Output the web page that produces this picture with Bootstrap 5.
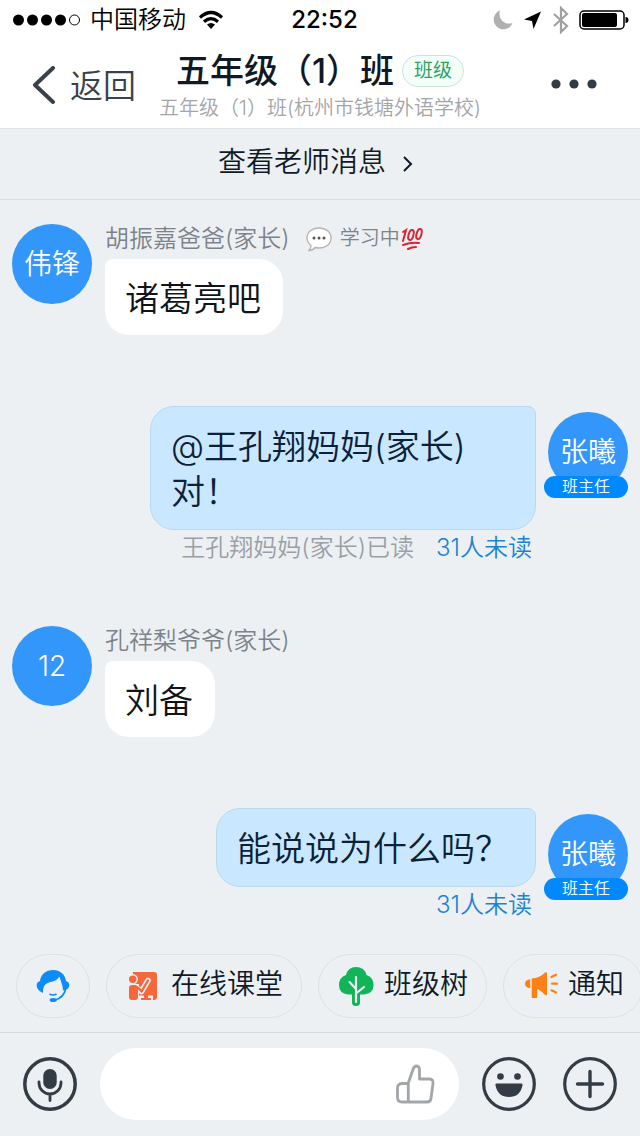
<!DOCTYPE html>
<html lang="zh-CN">
<head>
<meta charset="utf-8">
<meta name="viewport" content="width=device-width, initial-scale=1">
<title>五年级（1）班</title>
<link href="https://cdn.jsdelivr.net/npm/bootstrap@5.3.0/dist/css/bootstrap.min.css" rel="stylesheet">
<style>
  body { font-family: Inter, "Noto Sans CJK SC", sans-serif; font-weight: 350; background: #ecf0f3; color: #0f1a26; }
  button { font-weight: inherit; }
  .status { height: 40px; color: #000; font-size: 24px; line-height: 40px; padding: 0 11px 0 12px; }
  .status .clock { font-weight: 500; }
  .side { flex: 1 1 0; }
  .topbar { height: 89px; border-bottom: 1px solid #dfe4e9; }
  .plain { border: 0; background: none; padding: 0; color: inherit; line-height: 1; }
  .back { font-size: 33px; color: #3a4148; margin-left: 32px; gap: 14px; }
  .more { margin-right: 43px; }
  .room { font-size: 34px; line-height: 46px; font-weight: 500; }
  .tag { font-size: 19px; line-height: 30px; font-weight: 400; color: #27a35f; border: 1px solid #c8e6d8; background: #f5fffa; padding: 0 11px; }
  .school { font-size: 20px; line-height: 28px; color: #a3a5a8; }
  .teacher { height: 71px; font-size: 28px; color: #0f1a26; border-bottom: 1px solid #d9dee2; }
  .teacher:hover { color: #0f1a26; }
  .chat { padding: 24px 12px 31px; }
  .avatar { width: 80px; height: 80px; background: #3296fa; color: #fff; font-size: 28px; }
  .words { margin-left: 13px; }
  .who { font-size: 24px; line-height: 29px; color: #7d838a; margin-bottom: 6px; }
  .mood { font-size: 20px; }
  .bubble { font-size: 34px; line-height: 45px; padding: 17px 22px 14px 20px; background: #fff; border-radius: 8px 24px 24px 24px; color: #101418; }
  .mine { margin-top: 71px; margin-bottom: 60px; }
  .mine .stack { max-width: calc(100% - 230px); }
  .mine .bubble { background: #c9e7ff; border: 1px solid #b9d8ee; border-radius: 24px 8px 24px 24px; padding: 17px 26px 15px 20px; color: #0b2138; }
  .mine.last { margin-bottom: 0; }
  .me { width: 84px; height: 86px; margin-top: 6px; }
  .role { bottom: 0; height: 22px; font-size: 16px; line-height: 21px; background: #0089ff; color: #fff; }
  .receipt { font-size: 24px; line-height: 36px; color: #9a9fa4; gap: 22px; padding-right: 4px; }
  .receipt a { color: #1c82d6; }
  .chips { padding: 0 0 14px 16px; gap: 16px; overflow: hidden; }
  .chip { height: 64px; border: 1px solid #dce1e5; border-radius: 32px; font-size: 28px; padding: 0 18px 4px; gap: 10px; white-space: nowrap; flex: none; }
  .composer { height: 104px; border-top: 1px solid #d4d9dd; padding: 0 23px 2px; gap: 23px; }
  .entry { height: 72px; border-radius: 36px; background: #fff; padding: 0 24px 0 28px; }
  .entry input { min-width: 0; font-size: 28px; }
  .entry input:focus { box-shadow: none; }
  svg { display: block; flex: none; }
</style>
</head>
<body class="d-flex flex-column min-vh-100">
<header class="bg-white">
  <div class="status d-flex align-items-center">
    <div class="side d-flex align-items-center">
      <svg width="70" height="12" viewBox="0 0 70 12"><circle cx="6.500" cy="6" r="5.500"/><circle cx="20.500" cy="6" r="5.500"/><circle cx="34.500" cy="6" r="5.500"/><circle cx="48.500" cy="6" r="5.500"/><circle cx="62.500" cy="6" r="5" fill="none" stroke="#000"/></svg>
      <span class="ms-2 me-2">中国移动</span>
      <svg class="ms-1" width="26" height="20" viewBox="0 0 26 20" fill="none" stroke="#000" stroke-width="3.200"><path d="M2 7.500Q13-2.500 24 7.500M6 11.700q7-6 14 0"/><path d="M9 14.500q4-3 8 0L13 19z" fill="#000" stroke="none"/></svg>
    </div>
    <span class="clock ps-2">22:52</span>
    <div class="side d-flex align-items-center justify-content-end">
      <svg width="20" height="20" viewBox="0 0 20 20" fill="#b0b0b0"><path d="M7 .5A9.700 9.700 0 1 0 19.500 13C12 15.500 4.500 9.500 7 .5z"/></svg>
      <svg class="ms-2 me-2" width="22" height="20" viewBox="0 0 22 20"><path d="M20 1.500 12.500 19 11 11 3 9.500z"/></svg>
      <svg width="20" height="28" viewBox="0 0 20 28" fill="none" stroke="#a0a0a0" stroke-width="2.200"><path d="M3 8l13 12-6 6V2l6 6L3 20"/></svg>
      <svg class="ms-2" width="50" height="20" viewBox="0 0 50 20"><rect x="1" y="1" width="44" height="18" rx="4" fill="none" stroke="#000" stroke-width="1.500"/><rect x="3" y="3" width="35" height="14" rx="2"/><path d="M46.500 7q3 0 3 3t-3 3z"/></svg>
    </div>
  </div>
  <nav class="topbar d-flex">
    <div class="side d-flex align-items-center">
      <button class="plain back d-flex align-items-center text-nowrap pt-1" type="button">
        <svg width="24" height="40" viewBox="0 0 24 40" fill="none" stroke="#3a4148" stroke-width="4" stroke-linecap="round" stroke-linejoin="round"><path d="M21 2 3 19l18 17"/></svg>返回</button>
    </div>
    <div class="text-center text-nowrap pt-2">
      <div class="d-flex align-items-center justify-content-center room"><span>五年级（1）班</span><span class="tag rounded-pill ms-2">班级</span></div>
      <div class="school">五年级（1）班(杭州市钱塘外语学校)</div>
    </div>
    <div class="side d-flex align-items-center justify-content-end">
      <button class="plain more" type="button" aria-label="更多"><svg width="46" height="10" viewBox="0 0 46 10" fill="#333c45"><circle cx="5" cy="5" r="4.600"/><circle cx="23" cy="5" r="4.600"/><circle cx="41" cy="5" r="4.600"/></svg></button>
    </div>
  </nav>
</header>
<a href="#" class="teacher d-flex align-items-center justify-content-center text-decoration-none pe-2 pb-1">查看老师消息
  <svg class="ms-3 mt-1" width="12" height="18" viewBox="0 0 12 18" fill="none" stroke="#0f1a26" stroke-width="2"><path d="M2 2l7 7-7 7"/></svg></a>

<main class="chat flex-grow-1">
  <div class="d-flex">
    <div class="avatar rounded-circle d-flex align-items-center justify-content-center">伟锋</div>
    <div class="words d-flex flex-column align-items-start">
      <div class="who d-flex align-items-center">胡振嘉爸爸(家长)
        <svg class="ms-3 me-2" width="26" height="26" viewBox="0 0 26 26"><path d="M13 2c7 0 12 4 12 10s-5 10-12 10q-2 0-4-.500-2 3-6 3 2-2 2-5-4-3-4-7.500C1 6 6 2 13 2z" fill="#fff" stroke="#b4b7ba" stroke-width="1.400"/><g fill="#555"><circle cx="8" cy="12" r="1.500"/><circle cx="13" cy="12" r="1.500"/><circle cx="18" cy="12" r="1.500"/></g></svg><span class="mood">学习中</span>
        <svg width="24" height="24" viewBox="0 0 24 24" fill="none" stroke="#dc2430" stroke-width="2" stroke-linecap="round"><path d="M3 5l3-2-3 11"/><ellipse cx="11" cy="8" rx="2.400" ry="5.200" transform="rotate(16 11 8)"/><ellipse cx="19" cy="7" rx="2.400" ry="5.200" transform="rotate(16 19 7)"/><path d="M3 18q8-3 16-2M8 22q4-2 8-2"/></svg>
      </div>
      <div class="bubble">诸葛亮吧</div>
    </div>
  </div>

  <div class="mine d-flex justify-content-end">
    <div class="stack d-flex flex-column align-items-end">
      <div class="bubble">@王孔翔妈妈(家长)对！</div>
      <div class="receipt d-flex text-nowrap"><span>王孔翔妈妈(家长)已读</span><a href="#" class="text-decoration-none">31人未读</a></div>
    </div>
    <div class="me position-relative ms-2 d-flex justify-content-end">
      <div class="avatar rounded-circle d-flex align-items-center justify-content-center">张曦</div>
      <span class="role position-absolute w-100 rounded-pill text-center">班主任</span>
    </div>
  </div>

  <div class="d-flex">
    <div class="avatar rounded-circle d-flex align-items-center justify-content-center">12</div>
    <div class="words d-flex flex-column align-items-start">
      <div class="who">孔祥梨爷爷(家长)</div>
      <div class="bubble">刘备</div>
    </div>
  </div>

  <div class="mine last d-flex justify-content-end">
    <div class="stack d-flex flex-column align-items-end">
      <div class="bubble">能说说为什么吗？</div>
      <div class="receipt"><a href="#" class="text-decoration-none">31人未读</a></div>
    </div>
    <div class="me position-relative ms-2 d-flex justify-content-end">
      <div class="avatar rounded-circle d-flex align-items-center justify-content-center">张曦</div>
      <span class="role position-absolute w-100 rounded-pill text-center">班主任</span>
    </div>
  </div>
</main>

<footer>
  <div class="chips d-flex">
    <button class="plain chip d-flex align-items-center pb-0" type="button" aria-label="客服">
      <svg width="36" height="36" viewBox="0 0 36 36" fill="#0d8bf8"><path d="M8 25C4 23 1.700 21 1.700 17q0-3 3.300-4C6 6 11 2 18 2s12 4 13 11q3.300 1 3.300 4 0 3-3 4.500l-3.300 1C28 17 25.500 13 24.500 8.500 22 12.500 18 13.500 14 14.500 9 16 8 19 8 25z"/><path d="M31 20C29.500 27 26 30.500 20 32M14.500 26q3.500 2 7 0" fill="none" stroke="#0d8bf8" stroke-width="1.700"/><ellipse cx="18.200" cy="32" rx="3.600" ry="2"/></svg>
    </button>
    <button class="plain chip d-flex align-items-center" type="button">
      <svg width="36" height="36" viewBox="0 0 36 36"><path d="M8 6h21q3 0 3 3v22q0 3-3 3H8z" fill="#f4683c"/><path d="M14 29.500h14V35H14z" fill="#ecf0f3"/><path d="M19 29h4v3h3v2H16v-2h3z" fill="#f4683c"/><circle cx="7.700" cy="13.300" r="5.200" fill="#ecf0f3"/><path d="M7 21q6 0 9.500 4.500L23 14.500" fill="none" stroke="#ecf0f3" stroke-width="5.600" stroke-linecap="round" stroke-linejoin="round"/><path d="M3 18h11v17H3z" fill="#ecf0f3"/><path d="M9 21q5 0 7.500 4.500L23 14.500" fill="none" stroke="#f4683c" stroke-width="2.400" stroke-linecap="round" stroke-linejoin="round"/><circle cx="7.700" cy="13.300" r="3.700" fill="#f4683c"/><path d="M4 22q0-3 3-3h2.500q3.500 0 3.500 4v8q0 3-3 3H7q-3 0-3-3z" fill="#f4683c"/></svg>在线课堂</button>
    <button class="plain chip d-flex align-items-center" type="button">
      <svg width="37" height="44" viewBox="0 0 37 44"><path d="M19 5q8.500 0 10.500 8 7 2.500 7 10 0 8.500-9.500 9.500h-4V40.500q0 3.500-4 3.500t-4-3.500V32.500h-4Q2 31.500 2 23q0-7.500 7-10 2-8 10-8z" fill="#12b458"/><path d="M19 15v25M12.500 20l6.500 7M27 25l-8 6.500" fill="none" stroke="#ecf0f3" stroke-width="2.200" stroke-linecap="round"/></svg>班级树</button>
    <button class="plain chip d-flex align-items-center" type="button">
      <svg width="36" height="36" viewBox="0 0 36 36" fill="#fb8114"><path d="M8.300 13.300v9Q3 21.500 3 17.800t5.300-4.500zM9.700 12.500Q18 12 23 6.500q2-1 2 1V28q0 2-2 1-3-3.500-6.500-5.500l-1.300-.500V32H9.700z"/><path d="M29.500 11l4.500-2.300M30 17.700h5M29.500 24.300l4.500 2.300" fill="none" stroke="#fb8114" stroke-width="2.200" stroke-linecap="round"/></svg>通知</button>
  </div>
  <div class="composer d-flex align-items-center">
    <button class="plain" type="button" aria-label="语音"><svg width="54" height="54" viewBox="0 0 54 54" fill="none" stroke="#333c45" stroke-width="3.500" stroke-linecap="round"><circle cx="27" cy="27" r="25.200"/><rect x="20.300" y="12" width="13.400" height="20" rx="6.500" fill="#333c45" stroke="none"/><path d="M16 25v1a11 11 0 0 0 22 0v-1M27 37.500v6" stroke-width="2.800"/></svg></button>
    <div class="entry d-flex align-items-center flex-grow-1">
      <input class="form-control border-0 bg-transparent p-0" type="text" aria-label="输入消息">
      <svg width="40" height="40" viewBox="0 0 40 40" fill="none" stroke="#a3a6a9" stroke-width="2.800" stroke-linejoin="round"><path d="M13.300 19.500H7q-4.500 0-4.500 4.500v9.500q0 4.500 4.500 4.500h25q3.500 0 4-3.500l2-15q.5-4.500-3.500-4.500h-10V6.500Q24.500 2 21.500 2 19 2 18 5.500L13.300 19V38"/></svg>
    </div>
    <button class="plain" type="button" aria-label="表情"><svg width="54" height="54" viewBox="0 0 54 54" fill="#333c45"><circle cx="27" cy="27" r="25.300" fill="none" stroke="#333c45" stroke-width="3.200"/><circle cx="18.500" cy="19.500" r="3.300"/><circle cx="35.500" cy="19.500" r="3.300"/><path d="M15 26.500h24q2 0 1.500 2Q38 40 27 40T13.500 28.500q-.500-2 1.500-2z"/></svg></button>
    <button class="plain ms-1" type="button" aria-label="添加"><svg width="54" height="54" viewBox="0 0 54 54" fill="none" stroke="#333c45" stroke-width="3.400" stroke-linecap="round"><circle cx="27" cy="27" r="25.300" stroke-width="3.200"/><path d="M27 14.500v25M14.500 27h25"/></svg></button>
  </div>
</footer>
<script src="https://cdn.jsdelivr.net/npm/bootstrap@5.3.0/dist/js/bootstrap.bundle.min.js"></script>
</body>
</html>
